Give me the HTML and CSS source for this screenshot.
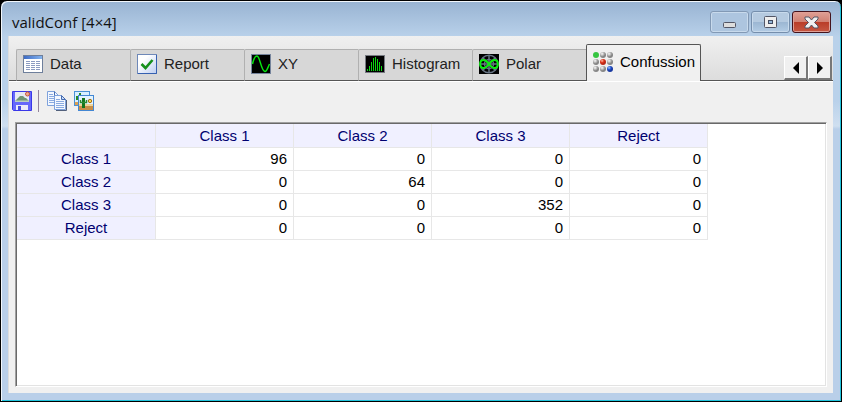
FILE: index.html
```html
<!DOCTYPE html>
<html lang="en">
<head>
<meta charset="utf-8">
<title>validConf [4×4]</title>
<link rel="stylesheet" href="styles.css">
</head>
<body>
<main class="window">
  <header class="titlebar">
    <h1 class="title">validConf [4×4]</h1>
    <div class="controls">
      <button class="control" aria-label="Minimize"><svg width="13" height="6" viewBox="0 0 13 6"><rect x=".5" y=".5" width="12" height="5" rx="1" fill="#ddd" stroke="#535666"/></svg></button>
      <button class="control max" aria-label="Maximize"><svg width="13" height="12" viewBox="0 0 13 12"><rect x=".5" y=".5" width="12" height="11" rx="1" fill="#eee" stroke="#535666"/><rect x="4.500" y="4.500" width="4" height="3" fill="#93b5d7" stroke="#424b60"/></svg></button>
      <button class="control close" aria-label="Close"><svg width="15" height="13" viewBox="0 0 15 13"><path d="M1 1h4l2.500 3L10 1h4v2l-3.500 3.500L14 10v2h-4L7.500 9L5 12H1v-2l3.500-3.500L1 3z" fill="#f0f0f0" stroke="#535666" stroke-linejoin="round"/></svg></button>
    </div>
  </header>
  <section class="client">
    <nav class="tabbar">
      <div class="tabs" role="tablist">
        <button class="tab" role="tab" aria-selected="false">
          <svg width="20" height="20" viewBox="0 0 20 20"><defs><linearGradient id="blue"><stop stop-color="#3d6bc6"/><stop offset="1" stop-color="#83b3ee"/></linearGradient></defs><rect x=".5" y="1.500" width="19" height="17" fill="#fff" stroke="#6e7f9b"/><path d="M1 2h18v3H1z" fill="url(#blue)"/><path d="M3 7.500h14M3 9.500h14M3 11.500h14M3 13.500h14M3 15.500h14" stroke="#8c9bc0" stroke-dasharray="4 1"/></svg>
          Data</button>
        <button class="tab" role="tab" aria-selected="false">
          <svg width="20" height="20" viewBox="0 0 20 20"><defs><linearGradient id="paper" x2="1" y2="1"><stop offset=".3" stop-color="#fff"/><stop offset="1" stop-color="#bccdf0"/></linearGradient></defs><rect x=".5" y=".5" width="19" height="19" fill="url(#paper)" stroke="#6e88b8"/><path d="M19.500 1v18.500H1" fill="none" stroke="#3560b0"/><path d="M4.500 10L8.500 14L15.500 6" fill="none" stroke="#16901c" stroke-width="2.600"/></svg>
          Report</button>
        <button class="tab" role="tab" aria-selected="false">
          <svg width="20" height="20" viewBox="0 0 20 20"><rect x=".5" y=".5" width="19" height="19" stroke="#76849c"/><path d="M1.500 10C3 3 5 2 6 2C9 2 10 17 14 17.500C16 17.500 17 13 18.500 10" fill="none" stroke="#08e810" stroke-width="1.500"/></svg>
          XY</button>
        <button class="tab" role="tab" aria-selected="false">
          <svg width="20" height="20" viewBox="0 0 20 20"><rect x=".5" y="1.500" width="19" height="17" stroke="#777b82"/><path d="M2.500 15v2M4.500 12v5M6.500 8v9M8.500 4v13M10.500 3v14M12.500 5v12M14.500 8v9M16.500 12v5" stroke="#0bd80e"/></svg>
          Histogram</button>
        <button class="tab" role="tab" aria-selected="false">
          <svg width="20" height="20" viewBox="0 0 20 20"><path d="M0 0h20v20H0z"/><g fill="none" stroke="#667383" stroke-width="1.500"><circle cx="10" cy="10" r="8.800"/><circle cx="10" cy="10" r="4.500"/><path d="M10 1v18M1 10h18M4 4l12 12M16 4L4 16"/></g><path d="M10 10C7 6 6 6 4.500 6C0 6 0 14 4.500 14C6 14 7 14 10 10C13 6 14 6 15.500 6C20 6 20 14 15.500 14C14 14 13 14 10 10" fill="none" stroke="#0bee0d" stroke-width="2"/></svg>
          Polar</button>
        <button class="tab active" role="tab" aria-selected="true">
          <svg width="20" height="20" viewBox="0 0 20 20"><defs><radialGradient id="gray" cx=".35" cy=".3"><stop stop-color="#fafafa"/><stop offset="1" stop-color="#858585"/></radialGradient><radialGradient id="red" cx=".35" cy=".3"><stop stop-color="#ffc0a8"/><stop offset=".6" stop-color="#df351e"/><stop offset="1" stop-color="#ba2816"/></radialGradient><radialGradient id="ball" cx=".35" cy=".3"><stop stop-color="#9fc4ff"/><stop offset=".6" stop-color="#2456d0"/><stop offset="1" stop-color="#1838a0"/></radialGradient></defs><g fill="url(#gray)"><circle cx="10" cy="3" r="3"/><circle cx="17" cy="3" r="3"/><circle cx="3" cy="10" r="3"/><circle cx="17" cy="10" r="3"/><circle cx="3" cy="17" r="3"/><circle cx="10" cy="17" r="3"/></g><circle cx="3" cy="3" r="3" fill="#36c541"/><circle cx="10" cy="10" r="3" fill="url(#red)"/><circle cx="17" cy="17" r="3" fill="url(#ball)"/></svg>
          Confussion</button>
      </div>
      <div class="scrollers">
        <button class="scroller" aria-label="Previous tabs"><svg width="6" height="12" viewBox="0 0 6 12"><path d="M6 0v12L0 6z"/></svg></button>
        <button class="scroller" aria-label="Next tabs"><svg width="6" height="12" viewBox="0 0 6 12"><path d="M0 0v12L6 6z"/></svg></button>
      </div>
    </nav>
    <div class="toolbar">
      <button class="tool" aria-label="Save image"><svg width="20" height="20" viewBox="0 0 20 20"><path d="M.5 .5h19v19h-18l-1-1z" fill="#6668fa" stroke="#3a38e8"/><path d="M3 1h14v10H3z" fill="#e6eaf4"/><path d="M3 10L8 5h3l2 2h1l3 3z" fill="#6f9575"/><path d="M3 9.500h14v1.500H3z" fill="#bcd1c2"/><circle cx="15.500" cy="3" r="2" fill="#efad92" stroke="#c6573d"/><path d="M4 14h12v5H4z" fill="#ececfa"/><path d="M6 15h3v4H6z" fill="#4a4de0"/></svg></button>
      <span class="divider"></span>
      <button class="tool" aria-label="Copy"><svg width="20" height="20" viewBox="0 0 20 20"><path d="M9 19.500h10.500V9" fill="none" stroke="#53617c"/><g fill="#f3f8ff" stroke="#7ea2dc"><path d="M.5 .5h7l4 4v10H.5z"/><path d="M7.500 4.500h7l4 4v10h-11z"/></g><path d="M7.500 .5v4M14.500 4.500v4h4z" fill="#c9dcf8" stroke="#466cb0"/><path d="M2 3.500h4M2 5.500h5M2 7.500h5M2 9.500h5M2 11.500h5M9 8.500h4M9 10.500h8M9 12.500h8M9 14.500h8M9 16.500h8" stroke="#8aabe0"/></svg></button>
      <button class="tool" aria-label="Copy image"><svg width="20" height="20" viewBox="0 0 20 20"><rect x=".5" y=".5" width="15" height="14" fill="#d9efff" stroke="#4a91d5"/><path d="M1 11h4v3H1z" fill="#dba052"/><path d="M3 9V5M5 3h2" fill="none" stroke="#268a27" stroke-width="2"/><rect x="4.500" y="4.500" width="15" height="15" fill="#e4f4ff" stroke="#4387d3"/><path d="M5 14h14v5H5z" fill="#c98f48"/><path d="M5 13h14v2H5z" fill="#efd398"/><path d="M9.500 17V7" stroke="#14751d" stroke-width="3"/><path d="M6.500 9v2.500h6V9" fill="none" stroke="#2a8a30" stroke-width="1.500"/><circle cx="16" cy="10" r="1.700" fill="#ffd94c" stroke="#a46d18"/></svg></button>
    </div>
    <div class="pane">
      <table class="matrix">
        <colgroup><col class="names"><col span="4"></colgroup>
        <thead><tr><td class="corner"></td><th scope="col">Class 1</th><th scope="col">Class 2</th><th scope="col">Class 3</th><th scope="col">Reject</th></tr></thead>
        <tbody>
          <tr><th scope="row">Class 1</th><td>96</td><td>0</td><td>0</td><td>0</td></tr>
          <tr><th scope="row">Class 2</th><td>0</td><td>64</td><td>0</td><td>0</td></tr>
          <tr><th scope="row">Class 3</th><td>0</td><td>0</td><td>352</td><td>0</td></tr>
          <tr><th scope="row">Reject</th><td>0</td><td>0</td><td>0</td><td>0</td></tr>
        </tbody>
      </table>
    </div>
  </section>
</main>
</body>
</html>
```
FILE: styles.css
```css
* { box-sizing: border-box; }
body {
  margin: 0;
  background: #000;
  font: 15px/20px "Liberation Sans", sans-serif;
  color: #222;
}
button { margin: 0; padding: 0; border: 0; background: none; font: inherit; color: inherit; }
svg { display: block; flex: none; }

.window {
  display: flex;
  flex-direction: column;
  min-height: 100vh;
  padding: 0 8px 8px 7px;
  border: 1px solid #000;
  border-radius: 7px 7px 0 0;
  background: linear-gradient(#98b3d2, #b9d1ea 36px, #b9d1ea 100px, #cfdff0 125px, #b9cfe9 128px);
  box-shadow: inset 1px 1px #f2f7fc, inset -1px -1px #20c4dc;
}
.titlebar {
  display: flex;
  justify-content: space-between;
  height: 35px;
  padding: 10px 2px 0 4px;
}
.title {
  margin: 0;
  font: 15px/22px "Open Sans", sans-serif;
  color: #111;
}
.controls { display: flex; gap: 2px; }
.control {
  display: flex;
  align-items: center;
  justify-content: center;
  width: 39px;
  height: 22px;
  border: 1px solid #758eac;
  border-radius: 3px;
  background: linear-gradient(#b5cae0 50%, #9bb6d2 50%, #b3cce5);
  box-shadow: inset 0 0 0 1px #c8daec;
}
.control:first-child { background: #adc5df; border-color: #8299b5; padding-top: 5px; }
.control.close {
  border-color: #44131c;
  background: linear-gradient(#dfa095, #d08072 50%, #b93c28 50%, #c65843);
  box-shadow: inset 0 0 0 1px #dfa097;
}

.client {
  flex: 1;
  display: flex;
  flex-direction: column;
  padding-bottom: 6px;
  border-left: 1px solid #ddd;
  background: #f0f0f0;
}
.tabbar {
  display: flex;
  align-items: flex-end;
  justify-content: space-between;
  height: 45px;
  padding: 0 1px 0 7px;
  background: linear-gradient(#f0f0f0, #dcdcdc);
  box-shadow: inset 0 -1px #555;
}
.tabs { display: flex; align-items: flex-end; }
.tab {
  display: flex;
  align-items: center;
  gap: 7px;
  width: 114px;
  height: 32px;
  padding: 0 0 2px 6px;
  border: solid #b0b0b0;
  border-width: 1px 0 0 1px;
  border-bottom: 1px solid #555;
  border-radius: 2px 0 0;
  background: #d7d7d7;
  white-space: nowrap;
}
.tab.active {
  width: 115px;
  height: 37px;
  border: solid #555;
  border-width: 1px 1px 0;
  border-radius: 2px 2px 0 0;
  background: #f0f0f0;
  color: #000;
}
.scrollers { display: flex; padding-bottom: 1px; }
.scroller {
  display: flex;
  align-items: center;
  justify-content: center;
  width: 24px;
  height: 24px;
  border: solid #fff;
  border-width: 1px 2px 2px 1px;
  border-right-color: #777;
  border-bottom-color: #777;
  background: #f0f0f0;
}
.toolbar {
  display: flex;
  align-items: center;
  gap: 6px;
  height: 41px;
  padding: 0 0 2px 3px;
  border-top: 1px solid #fff;
}
.divider { width: 1px; height: 22px; margin-right: 2px; background: #93849c; }
.tool + .tool { margin-left: 1px; }
.pane {
  flex: 1;
  margin: 0 6px;
  padding: 1px;
  border: 1px solid;
  border-color: #a0a0a0 #fff #fff #a0a0a0;
  background: #fff;
  box-shadow: inset 1px 1px #696969, inset -1px -1px #e3e3e3;
}
.matrix { table-layout: fixed; width: 691px; border-collapse: separate; border-spacing: 0; }
.names { width: 139px; }
.matrix th, .matrix td {
  height: 23px;
  padding: 0 6px 0 0;
  border: solid #e7e7e7;
  border-width: 0 1px 1px 0;
  line-height: 20px;
  text-align: right;
  color: #000;
}
.matrix th, .matrix .corner {
  padding: 0;
  background: #f0f0ff;
  font-weight: normal;
  text-align: center;
  color: #000070;
}
.matrix thead th, .matrix .corner { height: 24px; }
```
